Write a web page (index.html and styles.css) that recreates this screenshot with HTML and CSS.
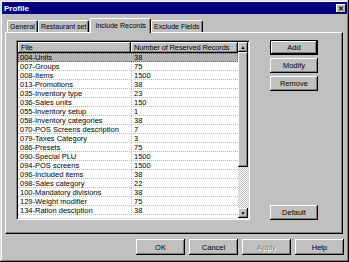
FILE: index.html
```html
<!DOCTYPE html>
<html lang="en">
<head>
  <meta charset="UTF-8">
  <title>Profile</title>
  <link rel="stylesheet" href="styles.css">
</head>
<body>
  <div class="window">
    <div class="titlebar">
      <span class="title">Profile</span>
      <span class="close">&#x2715;</span>
    </div>

    <div class="tabs">
      <div class="tab">General</div>
      <div class="tab">Restaurant set</div>
      <div class="tab active">Include Records</div>
      <div class="tab">Exclude Fields</div>
    </div>

    <div class="panel">
      <div class="list">
        <div class="list-body">
          <div class="header">
            <div class="col-head file-head">File</div>
            <div class="col-head">Number of Reserved Records</div>
          </div>
          <div class="rows">
            <div class="row selected"><span>004-Units</span><span>38</span></div>
            <div class="row"><span>007-Groups</span><span>75</span></div>
            <div class="row"><span>008-Items</span><span>1500</span></div>
            <div class="row"><span>013-Promotions</span><span>38</span></div>
            <div class="row"><span>035-Inventory type</span><span>23</span></div>
            <div class="row"><span>036-Sales units</span><span>150</span></div>
            <div class="row"><span>055-Inventory setup</span><span>1</span></div>
            <div class="row"><span>058-Inventory categories</span><span>38</span></div>
            <div class="row"><span>070-POS Screens description</span><span>7</span></div>
            <div class="row"><span>079-Taxes Category</span><span>3</span></div>
            <div class="row"><span>086-Presets</span><span>75</span></div>
            <div class="row"><span>090-Special PLU</span><span>1500</span></div>
            <div class="row"><span>094-POS screens</span><span>1500</span></div>
            <div class="row"><span>096-Included items</span><span>38</span></div>
            <div class="row"><span>098-Sales category</span><span>22</span></div>
            <div class="row"><span>100-Mandatory divisions</span><span>38</span></div>
            <div class="row"><span>129-Weight modifier</span><span>75</span></div>
            <div class="row"><span>134-Ration desciption</span><span>38</span></div>
          </div>
        </div>
        <div class="scrollbar">
          <div class="arrow">&#9650;</div>
          <div class="thumb"></div>
          <div class="track"></div>
          <div class="arrow">&#9660;</div>
        </div>
      </div>

      <div class="side">
        <button class="btn default">Add</button>
        <button class="btn">Modify</button>
        <button class="btn">Remove</button>
        <button class="btn bottom">Default</button>
      </div>
    </div>

    <div class="footer">
      <button class="btn">OK</button>
      <button class="btn">Cancel</button>
      <button class="btn disabled">Apply</button>
      <button class="btn">Help</button>
    </div>
  </div>
</body>
</html>
```
FILE: styles.css
```css
body {
  margin: 0;
  background: #c0c0c0;
  font-family: "Liberation Sans", Arial, sans-serif;
  font-size: 7.5px;
  color: #000;
}
.window {
  width: 349px;
  height: 262px;
  box-sizing: border-box;
  padding: 2px;
  background: #c0c0c0;
  box-shadow: inset -1px -1px #000, inset 1px 1px #dfdfdf, inset -2px -2px #808080, inset 2px 2px #fff;
  display: flex;
  flex-direction: column;
}
.titlebar {
  height: 12px;
  background: #000080;
  color: #fff;
  display: flex;
  align-items: center;
  justify-content: space-between;
  padding: 0 1px 0 2px;
}
.title {
  font-weight: bold;
  font-size: 8px;
}
.close {
  width: 10px;
  height: 9px;
  background: #c0c0c0;
  color: #000;
  font-size: 7px;
  font-weight: bold;
  line-height: 9px;
  text-align: center;
  box-shadow: inset -1px -1px #000, inset 1px 1px #fff;
}
.tabs {
  display: flex;
  align-items: flex-end;
  height: 16px;
  margin-top: 2px;
  padding-left: 5px;
  font-size: 7px;
}
.tab {
  height: 11px;
  line-height: 11px;
  padding: 0 2px;
  border: 1px solid #fff;
  border-right-color: #000;
  border-bottom: none;
  border-radius: 2px 2px 0 0;
  box-shadow: inset -1px 0 #808080;
}
.tab.active {
  height: 14px;
  line-height: 13px;
  padding: 0 4px;
  margin: 0 0 -1px 1px;
  background: #c0c0c0;
  position: relative;
  z-index: 1;
}
.panel {
  height: 202px;
  margin: 0 4px 0 3px;
  box-sizing: border-box;
  border: 1px solid #fff;
  border-right-color: #000;
  border-bottom-color: #000;
  box-shadow: inset -1px -1px #808080;
  display: flex;
  padding: 7px 0 0 10px;
}
.list {
  width: 234px;
  height: 180px;
  box-sizing: border-box;
  border: 1px solid;
  border-color: #808080 #fff #fff #808080;
  box-shadow: inset 1px 1px #000, inset -1px -1px #dfdfdf;
  padding: 1px;
  display: flex;
  background: #fff;
}
.list-body {
  flex: 1;
  display: flex;
  flex-direction: column;
}
.header {
  display: flex;
  height: 11px;
  background: #c0c0c0;
  letter-spacing: -0.15px;
}
.col-head {
  flex: 1;
  line-height: 11px;
  padding-left: 3px;
  box-shadow: inset -1px -1px #000, inset 1px 1px #fff, inset -2px -2px #808080;
}
.file-head {
  flex: 0 0 110px;
}
.row {
  display: grid;
  grid-template-columns: 113px 1fr;
  height: 9px;
  line-height: 9px;
  border-bottom: 1px dotted #b8b8b8;
  box-sizing: border-box;
}
.row span {
  padding-left: 2px;
  white-space: nowrap;
}
.row span + span {
  border-left: 1px dotted #b8b8b8;
}
.row.selected {
  background: #b4b4b4;
  outline: 1px dotted #606060;
  outline-offset: -1px;
}
.scrollbar {
  width: 10px;
  display: flex;
  flex-direction: column;
}
.arrow {
  height: 10px;
  background: #c0c0c0;
  font-size: 5px;
  line-height: 10px;
  text-align: center;
  box-shadow: inset -1px -1px #000, inset 1px 1px #fff, inset -2px -2px #808080;
}
.thumb {
  height: 115px;
  background: #c0c0c0;
  box-shadow: inset -1px -1px #000, inset 1px 1px #fff, inset -2px -2px #808080;
}
.track {
  flex: 1;
  background-color: #fff;
  background-image: repeating-conic-gradient(#c0c0c0 0 25%, #fff 0 50%);
  background-size: 2px 2px;
}
.side {
  display: flex;
  flex-direction: column;
  gap: 3px;
  margin-left: 20px;
}
.btn {
  width: 48px;
  height: 15px;
  padding: 0;
  border: none;
  background: #c0c0c0;
  font-family: inherit;
  font-size: 7.5px;
  color: #000;
  box-shadow: inset -1px -1px #000, inset 1px 1px #fff, inset -2px -2px #808080;
}
.btn.default {
  outline: 1px solid #000;
  outline-offset: -1px;
  box-shadow: inset -2px -2px #000, inset 2px 2px #fff, inset -3px -3px #808080;
}
.btn.bottom {
  margin-top: auto;
  margin-bottom: 13px;
}
.btn.disabled {
  color: #808080;
  text-shadow: 1px 1px #fff;
}
.footer {
  display: flex;
  justify-content: flex-end;
  gap: 4px;
  margin-top: 5px;
  padding-right: 3px;
}
.footer .btn {
  width: 49px;
  height: 16px;
}
```
